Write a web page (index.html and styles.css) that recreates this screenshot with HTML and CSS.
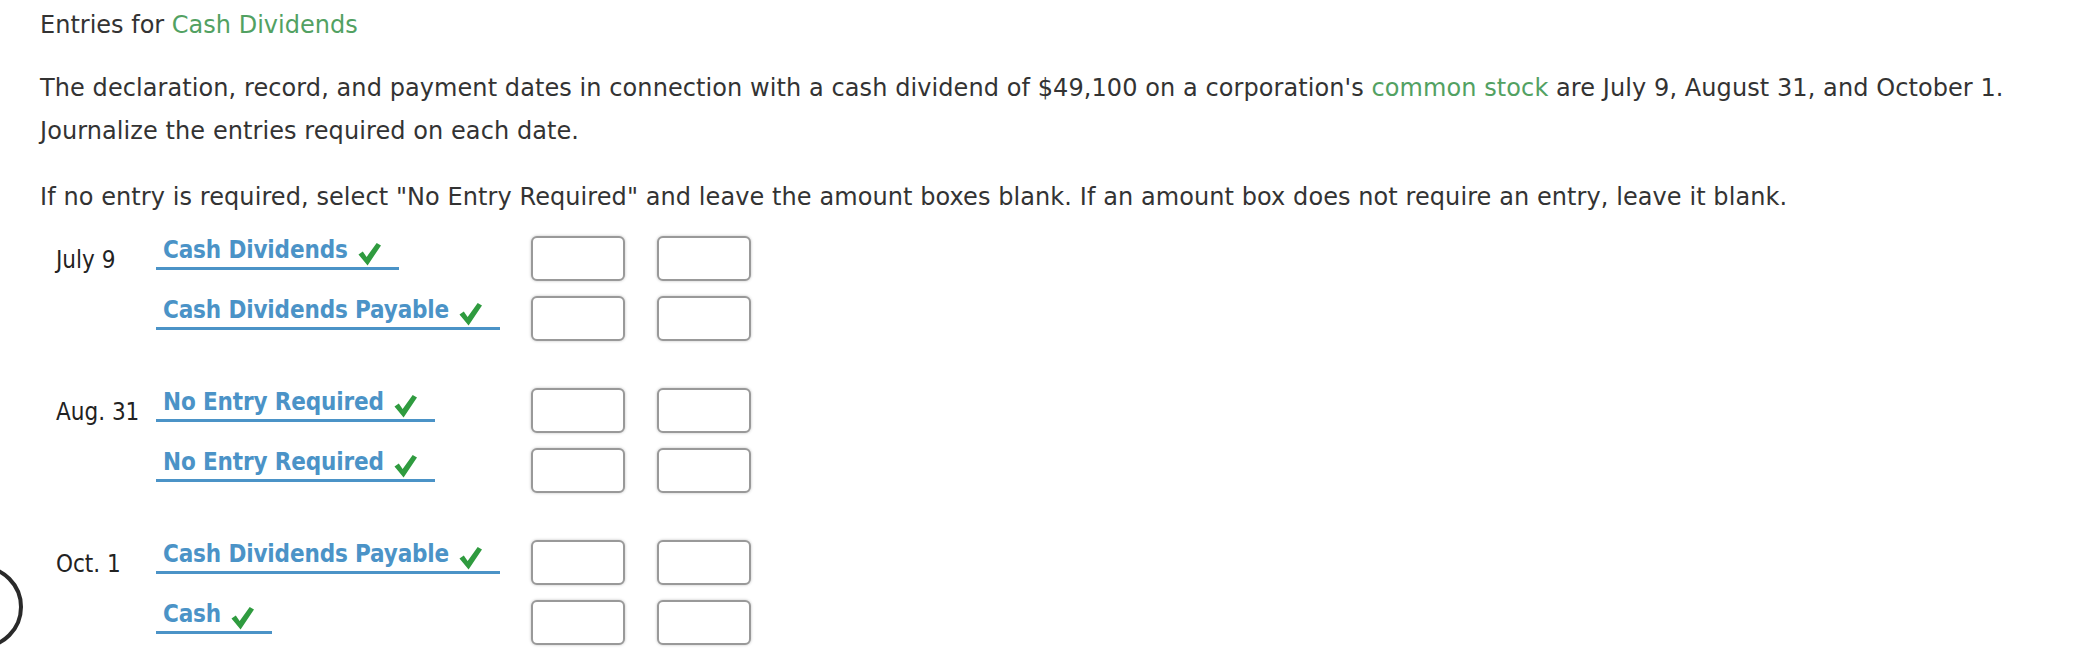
FILE: index.html
```html
<!DOCTYPE html>
<html lang="en">
<head>
<meta charset="utf-8">
<title>Entries for Cash Dividends</title>
<link rel="stylesheet" href="styles.css">
</head>
<body>
<div class="page">
  <h1 class="title">Entries for <span class="term">Cash Dividends</span></h1>
  <p class="text">The declaration, record, and payment dates in connection with a cash dividend of $49,100 on a corporation's <span class="term">common stock</span> are July 9, August 31, and October 1. Journalize the entries required on each date.</p>
  <p class="text">If no entry is required, select "No Entry Required" and leave the amount boxes blank. If an amount box does not require an entry, leave it blank.</p>

  <div class="journal">
    <div class="entry">
      <div class="date">July 9</div>
      <div class="lines">
        <div class="line">
          <div class="account"><span class="acct-select">Cash Dividends<svg class="check" viewBox="0 0 24 24"><polygon points="0.5,12.5 5,9.5 9,15 19.5,0.5 24,3 10,24"/></svg></span></div>
          <div class="amt"></div><div class="amt"></div>
        </div>
        <div class="line">
          <div class="account"><span class="acct-select">Cash Dividends Payable<svg class="check" viewBox="0 0 24 24"><polygon points="0.5,12.5 5,9.5 9,15 19.5,0.5 24,3 10,24"/></svg></span></div>
          <div class="amt"></div><div class="amt"></div>
        </div>
      </div>
    </div>

    <div class="entry">
      <div class="date">Aug. 31</div>
      <div class="lines">
        <div class="line">
          <div class="account"><span class="acct-select">No Entry Required<svg class="check" viewBox="0 0 24 24"><polygon points="0.5,12.5 5,9.5 9,15 19.5,0.5 24,3 10,24"/></svg></span></div>
          <div class="amt"></div><div class="amt"></div>
        </div>
        <div class="line">
          <div class="account"><span class="acct-select">No Entry Required<svg class="check" viewBox="0 0 24 24"><polygon points="0.5,12.5 5,9.5 9,15 19.5,0.5 24,3 10,24"/></svg></span></div>
          <div class="amt"></div><div class="amt"></div>
        </div>
      </div>
    </div>

    <div class="entry">
      <div class="date">Oct. 1</div>
      <div class="lines">
        <div class="line">
          <div class="account"><span class="acct-select">Cash Dividends Payable<svg class="check" viewBox="0 0 24 24"><polygon points="0.5,12.5 5,9.5 9,15 19.5,0.5 24,3 10,24"/></svg></span></div>
          <div class="amt"></div><div class="amt"></div>
        </div>
        <div class="line">
          <div class="account"><span class="acct-select">Cash<svg class="check" viewBox="0 0 24 24"><polygon points="0.5,12.5 5,9.5 9,15 19.5,0.5 24,3 10,24"/></svg></span></div>
          <div class="amt"></div><div class="amt"></div>
        </div>
      </div>
    </div>
  </div>
</div>
<div class="cursor-ring"></div>
</body>
</html>
```

FILE: styles.css
```css
html, body {
  margin: 0;
  padding: 0;
  background: #ffffff;
}

body {
  font-family: "DejaVu Sans", Verdana, sans-serif;
  color: #333333;
  overflow: hidden;
  position: relative;
  height: 664px;
}

.page {
  padding: 4px 0 0 40px;
}

.title {
  font-size: 24px;
  font-weight: normal;
  line-height: 43.2px;
  margin: 0;
}

.term {
  color: #52a162;
}

.text {
  font-size: 24px;
  line-height: 43.2px;
  margin: 20px 0 0 0;
  letter-spacing: 0.08px;
}

.text + .text {
  margin-top: 22px;
}

.journal {
  margin-top: 10px;
}

.entry {
  display: flex;
  margin-bottom: 32px;
}

.date {
  width: 116px;
  box-sizing: border-box;
  padding-left: 16px;
  height: 60px;
  display: flex;
  align-items: center;
  font-size: 24px;
  font-stretch: condensed;
  color: #222222;
  padding-top: 3px;
}

.lines {
  display: flex;
  flex-direction: column;
}

.line {
  display: flex;
  align-items: flex-start;
  height: 60px;
}

.account {
  width: 375px;
}

.acct-select {
  display: inline-flex;
  align-items: flex-end;
  margin-top: 7px;
  padding: 0 18px 3px 7px;
  border-bottom: 3px solid #4b93c7;
  font-size: 24px;
  line-height: 28px;
  font-weight: bold;
  font-stretch: condensed;
  letter-spacing: -0.15px;
  color: #4b93c7;
  white-space: nowrap;
}

.check {
  width: 23px;
  height: 24px;
  margin-left: 10px;
  margin-bottom: -2px;
  fill: #2f9b3f;
}

.amt {
  width: 94px;
  height: 45px;
  box-sizing: border-box;
  margin-top: 7.5px;
  border: 2px solid #999999;
  border-radius: 6px;
  background: #ffffff;
  box-shadow: 0 0 3px rgba(0, 0, 0, 0.25);
}

.amt + .amt {
  margin-left: 32px;
}

.cursor-ring {
  position: absolute;
  left: -61px;
  top: 565px;
  width: 84px;
  height: 84px;
  box-sizing: border-box;
  border: 4px solid #2a2a2a;
  border-radius: 50%;
}
```
